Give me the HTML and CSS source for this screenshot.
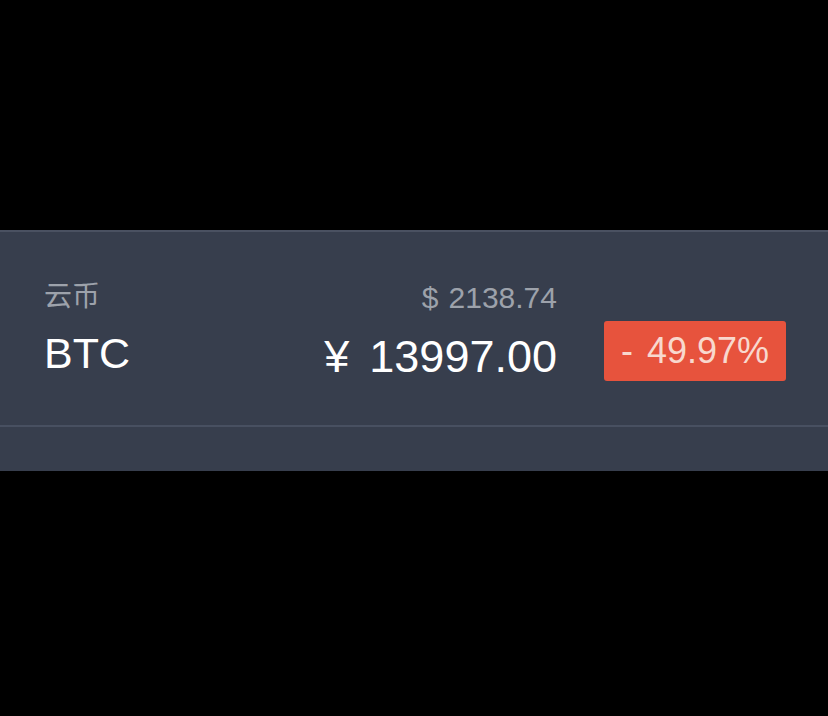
FILE: index.html
```html
<!DOCTYPE html>
<html lang="zh-CN">
<head>
    <meta charset="UTF-8">
    <meta name="viewport" content="width=device-width, initial-scale=1.0">
    <title>BTC</title>
    <link rel="stylesheet" href="styles.css">
</head>
<body>
    <div class="top"></div>
    <div class="panel">
        <div class="row">
            <div class="coin">
                <div class="coin-name">云币</div>
                <div class="coin-code">BTC</div>
            </div>
            <div class="price">
                <div class="price-usd"><span class="sym">$</span>2138.74</div>
                <div class="price-cny"><span class="sym">¥</span>13997.00</div>
            </div>
            <div class="change"><span class="sign">-</span>49.97%</div>
        </div>
        <div class="rest"></div>
    </div>
</body>
</html>
```

FILE: styles.css
```css
body {
    margin: 0;
    padding: 0;
    background-color: #000;
    font-family: "Liberation Sans", "Noto Sans CJK SC", sans-serif;
    width: 828px;
    height: 716px;
    overflow: hidden;
}
.top {
    height: 230px;
}
.panel {
    background-color: #373e4d;
    border-top: 2px solid #4a5161;
    height: 239px;
}
.row {
    display: flex;
    align-items: flex-start;
    height: 149px;
    padding: 44px 42px 0 44px;
    border-bottom: 2px solid #485061;
}
.coin {
    flex: 1;
}
.coin-name {
    font-family: "Noto Sans CJK SC", sans-serif;
    font-size: 28px;
    line-height: 36px;
    color: #9da2ab;
    margin-bottom: 14px;
}
.coin-code {
    font-size: 43px;
    line-height: 54px;
    color: #fff;
}
.price {
    text-align: right;
    margin-right: 47px;
    margin-top: 4px;
}
.price-usd {
    font-size: 30px;
    line-height: 36px;
    color: #9da2ab;
    margin-bottom: 14px;
}
.price-usd .sym {
    margin-right: 10px;
}
.price-cny {
    font-size: 45px;
    line-height: 54px;
    color: #fff;
}
.price-cny .sym {
    margin-right: 20px;
}
.change {
    width: 182px;
    height: 60px;
    line-height: 60px;
    margin-top: 45px;
    text-align: center;
    background-color: #e7533d;
    border-radius: 3px;
    color: #f8d8ce;
    font-size: 36px;
}
.change .sign {
    margin-right: 14px;
}
```
